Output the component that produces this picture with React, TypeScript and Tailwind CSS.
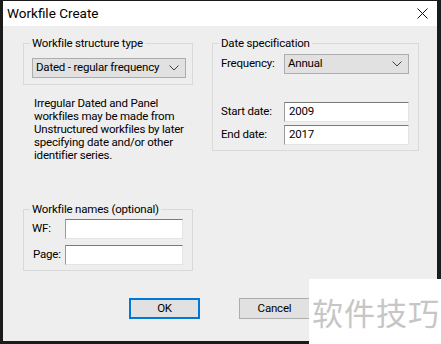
import React from 'react';

const font = { fontFamily: 'Roboto, "Liberation Sans", sans-serif' };

const Chevron = () => (
    <svg width="10" height="6" viewBox="0 0 10 6" className="shrink-0">
        <path d="M0.5 0.5 L5 5 L9.5 0.5" fill="none" stroke="#404040" strokeWidth="1" />
    </svg>
);

const Combo: React.FC<{ value: string; className: string }> = ({ value, className }) => (
    <div className={`flex items-center justify-between h-[20px] bg-[#e1e1e1] border border-[#adadad] pl-[3px] pr-[6px] ${className}`}>
        <span className="leading-none whitespace-nowrap">{value}</span>
        <Chevron />
    </div>
);

const Edit: React.FC<{ value?: string; className: string }> = ({ value, className }) => (
    <div className={`flex items-center h-[20px] bg-white border border-[#e3e3e3] border-t-[#7a7a7a] border-l-[#9a9a9a] pl-[4px] ${className}`}>
        <span className="leading-none">{value}</span>
    </div>
);

const Group: React.FC<{ title: string; className: string; children: React.ReactNode }> = ({ title, className, children }) => (
    <fieldset className={`border border-[#d9d9d9] ${className}`}>
        <legend className="ml-[6px] px-[2px] leading-[16px] whitespace-nowrap">{title}</legend>
        {children}
    </fieldset>
);

export default function App() {
    return (
        <div className="relative w-[441px] h-[344px] bg-[#1b1b1b] pt-[1px] pl-[3px] pr-[4px] pb-[3px] overflow-hidden text-[11.5px] tracking-[-0.2px] text-black" style={font}>
            <div className="flex flex-col h-full">
                {/* title bar */}
                <div className="flex items-center justify-between h-[25px] bg-white pl-[4px] pr-[9px]">
                    <span className="text-[13.5px] tracking-normal leading-none">Workfile Create</span>
                    <svg width="11" height="11" viewBox="0 0 11 11">
                        <path d="M0.5 0.5 L10.5 10.5 M10.5 0.5 L0.5 10.5" stroke="#111" strokeWidth="1" />
                    </svg>
                </div>

                <div className="flex-1 bg-[#eeeeee] flex flex-col">
                    <div className="flex pt-[9px]">
                        {/* left column */}
                        <div className="flex flex-col ml-[20px] w-[170px]">
                            <Group title="Workfile structure type" className="pb-[6px]">
                                <Combo value="Dated - regular frequency" className="mt-[7px] ml-[8px] w-[154px]" />
                            </Group>
                            <p className="mt-[12px] ml-[11px] w-[166px] leading-[13px]">
                                Irregular Dated and Panel workfiles may be made from Unstructured workfiles by later specifying date and/or other identifier series.
                            </p>
                            <Group title="Workfile names (optional)" className="mt-[39px] pb-[5px]">
                                <div className="flex items-center mt-[2px]">
                                    <span className="ml-[8px] w-[33px]">WF:</span>
                                    <Edit className="w-[118px]" />
                                </div>
                                <div className="flex items-center mt-[6px]">
                                    <span className="ml-[9px] w-[32px]">Page:</span>
                                    <Edit className="w-[118px]" />
                                </div>
                            </Group>
                        </div>

                        {/* right column */}
                        <div className="ml-[19px] w-[207px]">
                            <Group title="Date specification" className="pb-[5px]">
                                <div className="flex items-center mt-[3px]">
                                    <span className="ml-[8px] w-[63px]">Frequency:</span>
                                    <Combo value="Annual" className="w-[125px]" />
                                </div>
                                <div className="flex items-center mt-[28px]">
                                    <span className="ml-[8px] w-[63px]">Start date:</span>
                                    <Edit value="2009" className="w-[125px]" />
                                </div>
                                <div className="flex items-center mt-[3px]">
                                    <span className="ml-[8px] w-[63px]">End date:</span>
                                    <Edit value="2017" className="w-[125px]" />
                                </div>
                            </Group>
                        </div>
                    </div>

                    <div className="flex mt-auto mb-[22px] ml-[126px] gap-[39px]">
                        <button className="w-[71px] h-[21px] bg-[#e1e1e1] border-2 border-[#0078d7] leading-none">OK</button>
                        <button className="w-[71px] h-[21px] bg-[#e1e1e1] border border-[#adadad] leading-none">Cancel</button>
                    </div>
                </div>
            </div>

            {/* watermark */}
            <div className="absolute right-0 bottom-0 w-[132px] h-[65px] bg-white flex items-center pl-[3px]">
                <span className="text-[31px] leading-none text-[#c6c6c6] tracking-[1px]" style={{ fontFamily: '"Noto Sans CJK SC", sans-serif' }}>软件技巧</span>
            </div>
        </div>
    );
}
